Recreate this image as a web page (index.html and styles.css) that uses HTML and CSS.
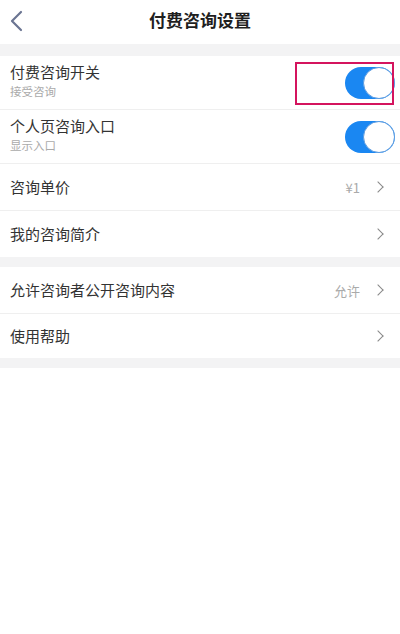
FILE: index.html
```html
<!DOCTYPE html>
<html lang="zh-CN">
<head>
    <meta charset="UTF-8">
    <meta name="viewport" content="width=device-width, initial-scale=1.0">
    <title>付费咨询设置</title>
    <link rel="stylesheet" href="styles.css">
</head>
<body>
    <div class="barra-top">
        <svg class="indietro" width="14" height="22" viewBox="0 0 14 22">
            <path d="M12 2 L3 11 L12 20" fill="none" stroke="#6b7592" stroke-width="2.2" stroke-linecap="round" stroke-linejoin="round"/>
        </svg>
        <h1>付费咨询设置</h1>
    </div>

    <div class="separatore"></div>

    <div class="gruppo">
        <div class="riga riga-alta evidenziata">
            <div class="testi">
                <div class="titolo">付费咨询开关</div>
                <div class="sotto">接受咨询</div>
            </div>
            <div class="interruttore"><span class="pomello"></span></div>
            <div class="cornice"></div>
        </div>
        <div class="riga riga-alta">
            <div class="testi">
                <div class="titolo">个人页咨询入口</div>
                <div class="sotto">显示入口</div>
            </div>
            <div class="interruttore"><span class="pomello"></span></div>
        </div>
        <div class="riga">
            <div class="titolo">咨询单价</div>
            <div class="destra"><span class="valore">¥1</span><span class="freccia"></span></div>
        </div>
        <div class="riga ultima">
            <div class="titolo">我的咨询简介</div>
            <div class="destra"><span class="freccia"></span></div>
        </div>
    </div>

    <div class="separatore piccolo"></div>

    <div class="gruppo">
        <div class="riga">
            <div class="titolo">允许咨询者公开咨询内容</div>
            <div class="destra"><span class="valore">允许</span><span class="freccia"></span></div>
        </div>
        <div class="riga ultima bassa">
            <div class="titolo">使用帮助</div>
            <div class="destra"><span class="freccia"></span></div>
        </div>
    </div>

    <div class="separatore piccolo"></div>
</body>
</html>
```

FILE: styles.css
```css
body {
    margin: 0;
    background-color: #fff;
    font-family: "Noto Sans CJK SC", "Noto Sans", sans-serif;
    color: #333;
    overflow: hidden;
}
.barra-top {
    height: 44px;
    display: flex;
    align-items: center;
    justify-content: center;
    position: relative;
}
.barra-top h1 {
    margin: 0;
    font-size: 17px;
    font-weight: bold;
    color: #1f1f1f;
    margin-top: -6px;
}
.indietro {
    position: absolute;
    left: 9px;
    top: 10px;
}
.separatore {
    height: 12px;
    background-color: #f3f3f4;
}
.separatore.piccolo {
    height: 10px;
}
.riga {
    height: 46px;
    display: flex;
    align-items: center;
    justify-content: space-between;
    padding: 0 15px 0 10px;
    border-bottom: 1px solid #efefef;
    position: relative;
}
.riga.ultima {
    border-bottom: none;
}
.riga.bassa {
    height: 44px;
}
.riga-alta {
    height: 53px;
}
.titolo {
    font-size: 15px;
    color: #333;
    line-height: 20px;
}
.sotto {
    font-size: 11.5px;
    color: #aaa;
    line-height: 16px;
    margin-top: 1px;
}
.testi {
    margin-top: -4px;
}
.destra {
    display: flex;
    align-items: center;
    gap: 14px;
}
.valore {
    font-family: "Noto Sans CJK SC", "Liberation Sans", sans-serif;
    font-size: 13px;
    color: #aaa;
}
.freccia {
    width: 7px;
    height: 7px;
    border-top: 1.6px solid #888;
    border-right: 1.6px solid #888;
    transform: rotate(45deg);
    margin-right: 3px;
}
.interruttore {
    width: 50px;
    height: 32px;
    border-radius: 16px;
    background-color: #1a87f2;
    margin-right: -10px;
    position: relative;
}
.pomello {
    position: absolute;
    right: 0;
    top: 0;
    width: 30px;
    height: 30px;
    border-radius: 50%;
    background-color: #fff;
    border: 1px solid #5b9be0;
}
.cornice {
    position: absolute;
    left: 295px;
    top: 6px;
    width: 95px;
    height: 39px;
    border: 2px solid #d4145e;
}
```
